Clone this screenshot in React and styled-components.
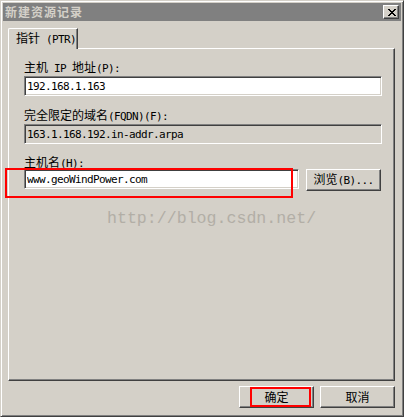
import React from "react";
import styled, { createGlobalStyle } from "styled-components";

const GlobalStyle = createGlobalStyle`
  html, body { margin: 0; padding: 0; background: #d4d0c8; }
  body { font-family: "Noto Sans CJK SC", sans-serif; }
`;

const Window = styled.div`
  position: relative;
  width: 404px;
  height: 417px;
  box-sizing: border-box;
  border: 1px solid;
  border-color: #d4d0c8 #404040 #404040 #d4d0c8;
  box-shadow: inset 1px 1px #ffffff, inset -1px -1px #808080;
  background: #d4d0c8;
  padding: 2px;
  display: flex;
  flex-direction: column;
  font-family: "Noto Sans CJK SC", sans-serif;
  font-size: 12px;
  color: #000;
`;

const TitleBar = styled.div`
  height: 18px;
  flex: none;
  background: #808080;
  display: flex;
  align-items: center;
  justify-content: space-between;
  padding: 0 2px;
`;

const TitleText = styled.span`
  color: #d4d0c8;
  font-weight: bold;
  font-size: 12px;
  line-height: 12px;
  letter-spacing: 1px;
  white-space: nowrap;
`;

const CloseButton = styled.div`
  width: 16px;
  height: 14px;
  box-sizing: border-box;
  background: #d4d0c8;
  border: 1px solid;
  border-color: #ffffff #404040 #404040 #ffffff;
  box-shadow: inset -1px -1px #808080;
  display: flex;
  align-items: center;
  justify-content: center;
  padding-left: 1px;
`;

const TabArea = styled.div`
  flex: 1;
  display: flex;
  flex-direction: column;
  margin: 7px 6px 0 5px;
`;

const TabStrip = styled.div`
  height: 20px;
  display: flex;
  align-items: flex-start;
`;

const Tab = styled.div`
  position: relative;
  z-index: 1;
  width: 70px;
  height: 21px;
  box-sizing: border-box;
  background: #d4d0c8;
  border-left: 1px solid #ffffff;
  border-top: 1px solid #ffffff;
  border-right: 1px solid #404040;
  border-top-left-radius: 2px;
  box-shadow: inset -1px 0 #808080;
  padding: 3px 0 0 7px;
  line-height: 12px;
  white-space: nowrap;
`;

const Panel = styled.div`
  flex: 1;
  box-sizing: border-box;
  border: 1px solid;
  border-color: #ffffff #404040 #404040 #ffffff;
  box-shadow: inset -1px -1px #808080;
  padding: 12px 12px 0 15px;
  display: flex;
  flex-direction: column;
`;

const Mono = styled.span`
  font-family: "DejaVu Sans Mono", "Liberation Mono", monospace;
  font-size: 11px;
  letter-spacing: -0.62px;
  white-space: pre;
`;

const Label = styled.div`
  height: 12px;
  line-height: 12px;
  margin-bottom: ${(p) => p.$gap}px;
  white-space: nowrap;
`;

const TextBox = styled.input`
  display: block;
  width: ${(p) => p.$w || "100%"};
  flex: none;
  height: 20px;
  box-sizing: border-box;
  margin: 0 0 ${(p) => p.$mb || 0}px 0;
  padding: 0 2px;
  border: 1px solid;
  border-color: #808080 #ffffff #ffffff #808080;
  box-shadow: inset 1px 1px #404040, inset -1px -1px #d4d0c8;
  background: ${(p) => (p.readOnly ? "#d4d0c8" : "#ffffff")};
  font-family: "DejaVu Sans Mono", "Liberation Mono", monospace;
  font-size: 11px;
  letter-spacing: -0.62px;
  color: #000;
  outline: none;
`;

const HostRow = styled.div`
  display: flex;
  align-items: flex-start;
  gap: 7px;
`;

const Button = styled.button`
  width: 75px;
  height: 22px;
  flex: none;
  box-sizing: border-box;
  margin: 0;
  padding: 0;
  border: 1px solid;
  border-color: #ffffff #404040 #404040 #ffffff;
  box-shadow: inset -1px -1px #808080;
  background: #d4d0c8;
  font-family: "Noto Sans CJK SC", sans-serif;
  font-size: 12px;
  line-height: 12px;
  color: #000;
  text-align: center;
  white-space: nowrap;
`;

const ButtonRow = styled.div`
  flex: none;
  display: flex;
  justify-content: flex-end;
  gap: 6px;
  margin: 5px 6px 6px 0;
`;

const Watermark = styled.div`
  position: absolute;
  left: 106px;
  top: 209px;
  font-family: "Liberation Mono", monospace;
  font-size: 16.6px;
  line-height: 17px;
  color: #b2aea6;
  pointer-events: none;
`;

const RedMark = styled.div`
  position: absolute;
  left: ${(p) => p.$x}px;
  top: ${(p) => p.$y}px;
  width: ${(p) => p.$w}px;
  height: ${(p) => p.$h}px;
  box-sizing: border-box;
  border: 2px solid #ff0000;
  pointer-events: none;
`;

const CloseGlyph = () => {
  const rows = [
    [[0, 2], [6, 2]],
    [[1, 2], [5, 2]],
    [[2, 4]],
    [[3, 2]],
    [[2, 4]],
    [[1, 2], [5, 2]],
    [[0, 2], [6, 2]],
  ];
  return (
    <svg width="8" height="7" viewBox="0 0 8 7" shapeRendering="crispEdges">
      {rows.map((segs, y) =>
        segs.map(([x, w], i) => (
          <rect key={`${y}-${i}`} x={x} y={y} width={w} height={1} fill="#000" />
        ))
      )}
    </svg>
  );
};

export default function App() {
  return (
    <>
      <GlobalStyle />
      <Window>
        <TitleBar>
          <TitleText>新建资源记录</TitleText>
          <CloseButton>
            <CloseGlyph />
          </CloseButton>
        </TitleBar>
        <TabArea>
          <TabStrip>
            <Tab>
              指针<Mono> (PTR)</Mono>
            </Tab>
          </TabStrip>
          <Panel>
            <Label $gap={3}>
              主机<Mono> IP </Mono>地址<Mono>(P):</Mono>
            </Label>
            <TextBox $mb={13} defaultValue="192.168.1.163" />
            <Label $gap={3}>
              完全限定的域名<Mono>(FQDN)(F):</Mono>
            </Label>
            <TextBox $mb={12} readOnly value="163.1.168.192.in-addr.arpa" />
            <Label $gap={1}>
              主机名<Mono>(H):</Mono>
            </Label>
            <HostRow>
              <TextBox $w="275px" defaultValue="www.geoWindPower.com" />
              <Button>
                浏览<Mono>(B)...</Mono>
              </Button>
            </HostRow>
          </Panel>
        </TabArea>
        <ButtonRow>
          <Button>确定</Button>
          <Button>取消</Button>
        </ButtonRow>
        <Watermark>http://blog.csdn.net/</Watermark>
        <RedMark $x={4} $y={167} $w={288} $h={30} />
        <RedMark $x={249} $y={386} $w={61} $h={20} />
      </Window>
    </>
  );
}
